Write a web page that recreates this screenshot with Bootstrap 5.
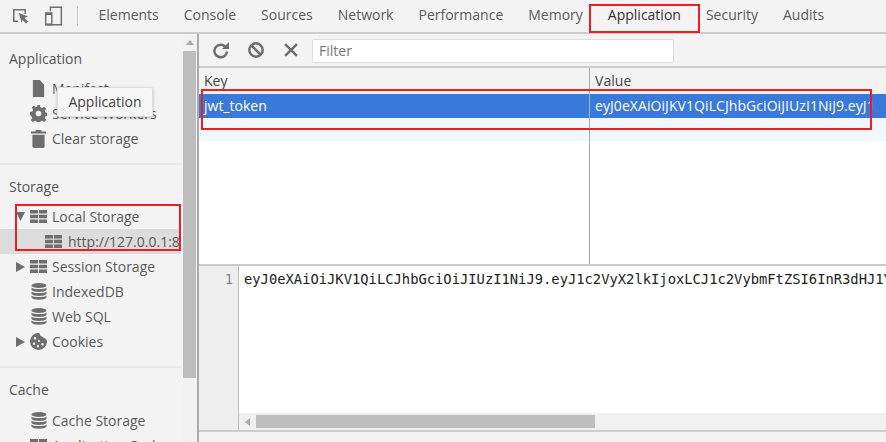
<!DOCTYPE html>
<html lang="en">
<head>
<meta charset="utf-8">
<title>Application</title>
<link href="https://cdn.jsdelivr.net/npm/bootstrap@5.3.0/dist/css/bootstrap.min.css" rel="stylesheet">
<style>
html,body{height:100%;overflow:hidden}
body{font-family:"Open Sans","Noto Sans",sans-serif;font-size:14px;color:#555;background:#f3f3f3;position:relative;width:886px;height:442px}
.topbar{height:34px;border-bottom:2px solid #ccc;background:#f3f3f3}
.tool-ico{fill:#6e6e6e}
.tb-icons{width:77px;padding-left:12px;gap:15px}
.tb-sep{width:1px;height:20px;background:#ccc}
.tab-item{padding:0 12.5px;height:32px;line-height:32px;color:#5a5a5a;font-size:14px;white-space:nowrap}
.tab-active{color:#333;height:34px;box-shadow:inset 0 -2px 0 #3879d9}
.mainrow{height:408px}
.side{width:199px;border-right:2px solid #aaa;background:#f3f3f3;overflow:hidden;flex:none}
.side-list{width:183px;flex:none;overflow:hidden}
.sec-head{height:39px;padding:10px 0 0 9px;font-size:14px;line-height:24px;color:#555}
.sec-first{height:42px;padding-top:13px}
.sec-last{height:40px}
.sec-gap{height:12px}
.sec-div{height:2px;background:#eaeaea;width:181px}
.item{height:25px;line-height:25px;white-space:nowrap;color:#5a5a5a;font-size:14px;width:181px;padding-left:28px}
.item-arrow{padding-left:16px}
.arrow-slot{width:12px;flex:none}
.item-sel{background:#dcdcdc;padding-left:43px}
.ico-slot{width:21px;margin-right:3px;flex:none;display:flex;justify-content:center;align-items:center}
.item-sel .ico-slot{margin-right:4px}
.sbar{width:16px;background:#f1f1f1;flex:none}
.sbar-top{height:16px}
.sbar-thumb{height:327px;width:13px;background:#bdbdbd;margin-top:1px}
.content{flex:1;min-width:0;background:#fff;overflow:hidden}
.ctool{height:34px;background:#f3f3f3;border-bottom:2px solid #ccc;padding-left:13px}
.ctool-block{margin-left:19px}
.ctool-x{margin-left:20px}
.filter-box{width:362px;height:24px;background:#fff;border:1px solid #ddd;border-radius:2px;margin:1px 0 0 14px;padding-left:6px;line-height:22px;font-size:14px;color:#777}
.cell-k{width:391px;flex:none;padding-left:5px;border-right:1px solid #aaa;white-space:nowrap;overflow:hidden}
.cell-v{flex:1;padding-left:5px;white-space:nowrap;overflow:hidden;letter-spacing:.07px}
.g-row{height:24px;line-height:24px;font-size:14px}
.g-head{height:26px;line-height:26px;color:#444;font-size:14px;background:#f3f3f3}
.g-sel{background:#3879d9;color:#fff}
.g-sel .cell-k{border-right-color:#9fb8dc}
.g-alt{height:23px;background:#f2f6fd}
.g-fill{height:123px}
.editor{height:166px;border-top:2px solid #ccc}
.gutter{width:40px;background:#eeeeee;border-right:1px solid #bbb;flex:none;text-align:right;padding:2px 5px 0 0;font-family:"DejaVu Sans Mono",monospace;font-size:13.8px;color:#888;line-height:22px}
.code{font-family:"DejaVu Sans Mono",monospace;font-size:13.8px;color:#222;padding:2px 0 0 5px;line-height:22px;white-space:nowrap;overflow:hidden;flex:1;min-height:0}
.hbar{height:17px;flex:none;background:#f0f0f0;padding-left:6px}
.hbar-arrow{width:11px;flex:none}
.hbar-thumb{width:339px;height:13px;background:#bdbdbd}
.statusbar{height:12px;background:#f3f3f3;border-top:2px solid #ccc}
.tip{position:absolute;left:57px;top:87px;width:96px;height:30px;background:#f6f6f6;border:1px solid #ddd;border-radius:2px;box-shadow:0 1px 3px rgba(0,0,0,.25);text-align:center;line-height:28px;color:#444;font-size:14px}
.mark-box{position:absolute;border:2px solid #ee1c25;pointer-events:none}
.box-a{left:589px;top:4px;width:111px;height:29px}
.box-b{left:201px;top:89px;width:671px;height:41px}
.box-c{left:15px;top:204px;width:166px;height:47px}
</style>
</head>
<body>
<div class="topbar d-flex align-items-center">
  <div class="tb-icons d-flex align-items-center">
    <svg width="17" height="17" viewBox="0 0 17 17"><path class="tool-ico" d="M1 1h13v5h-1.500V2.500h-10v10H6V14H1z"/><path class="tool-ico" d="M7 5l9 3.500-3.500 1.500 3.500 3.500-2 2-3.500-3.500L9.500 15z"/></svg>
    <svg width="19" height="20" viewBox="0 0 20 20"><path class="tool-ico" d="M6 0h13v20H3v-1.500h14.500v-17h-10V5H6z"/><path class="tool-ico" d="M1 6h8v14H1zM2.500 9v9h5V9z"/></svg>
  </div>
  <div class="tb-sep"></div>
  <div class="d-flex" style="margin-left:8px">
    <div class="tab-item">Elements</div><div class="tab-item">Console</div><div class="tab-item">Sources</div><div class="tab-item">Network</div><div class="tab-item">Performance</div><div class="tab-item">Memory</div><div class="tab-item tab-active">Application</div><div class="tab-item">Security</div><div class="tab-item">Audits</div>
  </div>
</div>
<div class="mainrow d-flex">
  <div class="side d-flex">
    <div class="side-list">
      <div class="sec-head sec-first">Application</div>
      <div class="item d-flex align-items-center"><span class="ico-slot"><svg width="13" height="17" viewBox="0 0 15 18" preserveAspectRatio="none"><path class="tool-ico" d="M1 0h8l5 5v13H1z"/></svg></span>Manifest</div>
      <div class="item d-flex align-items-center"><span class="ico-slot"><svg width="17" height="17" viewBox="0 0 18 18"><path class="tool-ico" fill-rule="evenodd" d="M7.500 0h3l.5 2.500 1.800.8 2.200-1.400 2 2.100-1.400 2.200.8 1.800 2.600.5v3l-2.600.5-.8 1.800 1.400 2.200-2 2-2.200-1.400-1.800.8-.5 2.600h-3l-.5-2.600-1.800-.8-2.200 1.400-2-2 1.400-2.200-.8-1.800L0 10.500v-3l2.600-.5.800-1.800L2 3l2-2.100 2.200 1.400L8 1.500zM9 6a3 3 0 1 0 0 6 3 3 0 0 0 0-6z"/></svg></span>Service Workers</div>
      <div class="item d-flex align-items-center"><span class="ico-slot"><svg width="15" height="18" viewBox="0 0 16 19"><path class="tool-ico" d="M5 0h6v1.500h5V3.500H0V1.500h5zM1.500 5h13v12.500A1.500 1.500 0 0 1 13 19H3a1.500 1.500 0 0 1-1.500-1.500z"/></svg></span>Clear storage</div>
      <div class="sec-gap"></div>
      <div class="sec-div"></div>
      <div class="sec-head">Storage</div>
      <div class="item item-arrow d-flex align-items-center"><span class="arrow-slot"><svg width="9" height="9" viewBox="0 0 9 9" class="d-block"><path class="tool-ico" d="M0 0h9L4.500 9z"/></svg></span><span class="ico-slot"><svg width="17" height="13" viewBox="0 0 17 13"><path class="tool-ico" d="M0 0h8v3.500H0zM9 0h8v3.500H9zM0 4.700h8v3.600H0zM9 4.700h8v3.600H9zM0 9.500h8V13H0zM9 9.500h8V13H9z"/></svg></span>Local Storage</div>
      <div class="item item-sel d-flex align-items-center"><span class="ico-slot"><svg width="17" height="13" viewBox="0 0 17 13"><path class="tool-ico" d="M0 0h8v3.500H0zM9 0h8v3.500H9zM0 4.700h8v3.600H0zM9 4.700h8v3.600H9zM0 9.500h8V13H0zM9 9.500h8V13H9z"/></svg></span>http://127.0.0.1:8</div>
      <div class="item item-arrow d-flex align-items-center"><span class="arrow-slot"><svg width="9" height="10" viewBox="0 0 9 10" class="d-block"><path class="tool-ico" d="M0 0l9 5-9 5z"/></svg></span><span class="ico-slot"><svg width="17" height="13" viewBox="0 0 17 13"><path class="tool-ico" d="M0 0h8v3.500H0zM9 0h8v3.500H9zM0 4.700h8v3.600H0zM9 4.700h8v3.600H9zM0 9.500h8V13H0zM9 9.500h8V13H9z"/></svg></span>Session Storage</div>
      <div class="item d-flex align-items-center"><span class="ico-slot"><svg width="16" height="17" viewBox="0 0 16 17"><ellipse class="tool-ico" cx="8" cy="2.500" rx="7.500" ry="2.500"/><path class="tool-ico" d="M.5 4.500C2 6.500 14 6.500 15.500 4.500V7C14 9.500 2 9.500 .5 7zM.5 8.500C2 10.500 14 10.500 15.500 8.500V11C14 13.500 2 13.500 .5 11zM.5 12.500C2 14.500 14 14.500 15.500 12.500V14.500C14 17.500 2 17.500 .5 14.500z"/></svg></span>IndexedDB</div>
      <div class="item d-flex align-items-center"><span class="ico-slot"><svg width="16" height="17" viewBox="0 0 16 17"><ellipse class="tool-ico" cx="8" cy="2.500" rx="7.500" ry="2.500"/><path class="tool-ico" d="M.5 4.500C2 6.500 14 6.500 15.500 4.500V7C14 9.500 2 9.500 .5 7zM.5 8.500C2 10.500 14 10.500 15.500 8.500V11C14 13.500 2 13.500 .5 11zM.5 12.500C2 14.500 14 14.500 15.500 12.500V14.500C14 17.500 2 17.500 .5 14.500z"/></svg></span>Web SQL</div>
      <div class="item item-arrow d-flex align-items-center"><span class="arrow-slot"><svg width="9" height="10" viewBox="0 0 9 10" class="d-block"><path class="tool-ico" d="M0 0l9 5-9 5z"/></svg></span><span class="ico-slot"><svg width="17" height="17" viewBox="0 0 17 17"><path class="tool-ico" fill-rule="evenodd" d="M8.500 0c1 0 1.500.5 1.500 1.500S11 3.500 12 3.500s1 1.500 2 1.500 3 1.500 3 3.500a8.500 8.500 0 1 1-8.500-8.500zM5 4a1.300 1.300 0 1 0 0 2.600A1.300 1.300 0 0 0 5 4zM9 7a1 1 0 1 0 0 2 1 1 0 0 0 0-2zM4 9.500a1.200 1.200 0 1 0 0 2.400 1.200 1.200 0 0 0 0-2.400zM12.500 10a1.300 1.300 0 1 0 0 2.600 1.300 1.300 0 0 0 0-2.600zM8 12a1.200 1.200 0 1 0 0 2.400A1.200 1.200 0 0 0 8 12z"/></svg></span>Cookies</div>
      <div class="sec-gap"></div>
      <div class="sec-div"></div>
      <div class="sec-head sec-last">Cache</div>
      <div class="item d-flex align-items-center"><span class="ico-slot"><svg width="16" height="17" viewBox="0 0 16 17"><ellipse class="tool-ico" cx="8" cy="2.500" rx="7.500" ry="2.500"/><path class="tool-ico" d="M.5 4.500C2 6.500 14 6.500 15.500 4.500V7C14 9.500 2 9.500 .5 7zM.5 8.500C2 10.500 14 10.500 15.500 8.500V11C14 13.500 2 13.500 .5 11zM.5 12.500C2 14.500 14 14.500 15.500 12.500V14.500C14 17.500 2 17.500 .5 14.500z"/></svg></span>Cache Storage</div>
      <div class="item d-flex align-items-center"><span class="ico-slot"><svg width="17" height="13" viewBox="0 0 17 13"><path class="tool-ico" d="M0 0h8v6H0zM9 0h8v6H9zM0 7h8v6H0zM9 7h8v6H9z"/></svg></span>Application Cache</div>
    </div>
    <div class="sbar">
      <div class="sbar-top d-flex justify-content-center align-items-center" style="padding-right:3px"><svg width="8" height="5" viewBox="0 0 8 5" class="d-block"><path fill="#aaa" d="M4 0l4 5H0z"/></svg></div>
      <div class="sbar-thumb"></div>
    </div>
  </div>
  <div class="content d-flex flex-column">
    <div class="ctool d-flex align-items-center">
      <svg width="17" height="17" viewBox="0 0 17 17"><path fill="none" stroke="#6e6e6e" stroke-width="2.500" d="M14 5.500A6.300 6.300 0 1 0 15 9.500"/><path class="tool-ico" d="M10 7h7V0z"/></svg>
      <svg class="ctool-block" width="16" height="16" viewBox="0 0 16 16"><circle cx="8" cy="8" r="6.700" fill="none" stroke="#6e6e6e" stroke-width="2.500"/><path stroke="#6e6e6e" stroke-width="2.500" d="M3 3l10 10"/></svg>
      <svg class="ctool-x" width="14" height="14" viewBox="0 0 13 13"><path stroke="#6e6e6e" stroke-width="2.300" d="M1 1l11 11M12 1L1 12"/></svg>
      <div class="filter-box">Filter</div>
    </div>
    <div class="d-flex g-head"><div class="cell-k">Key</div><div class="cell-v">Value</div></div>
    <div class="d-flex g-row g-sel"><div class="cell-k">jwt_token</div><div class="cell-v">eyJ0eXAiOiJKV1QiLCJhbGciOiJIUzI1NiJ9.eyJ1</div></div>
    <div class="d-flex g-alt"><div class="cell-k"></div><div class="cell-v"></div></div>
    <div class="d-flex g-fill"><div class="cell-k"></div><div class="cell-v"></div></div>
    <div class="editor d-flex">
      <div class="gutter">1</div>
      <div class="d-flex flex-column flex-grow-1" style="min-width:0">
        <div class="code">eyJ0eXAiOiJKV1QiLCJhbGciOiJIUzI1NiJ9.eyJ1c2VyX2lkIjoxLCJ1c2VybmFtZSI6InR3dHJ1Y</div>
        <div class="hbar d-flex align-items-center"><span class="hbar-arrow"><svg width="5" height="8" viewBox="0 0 5 8" class="d-block"><path fill="#aaa" d="M0 4l5-4v8z"/></svg></span><div class="hbar-thumb"></div></div>
      </div>
    </div>
    <div class="statusbar"></div>
  </div>
</div>
<div class="tip">Application</div>
<div class="mark-box box-a"></div>
<div class="mark-box box-b"></div>
<div class="mark-box box-c"></div>
<script src="https://cdn.jsdelivr.net/npm/bootstrap@5.3.0/dist/js/bootstrap.bundle.min.js"></script>
</body>
</html>
